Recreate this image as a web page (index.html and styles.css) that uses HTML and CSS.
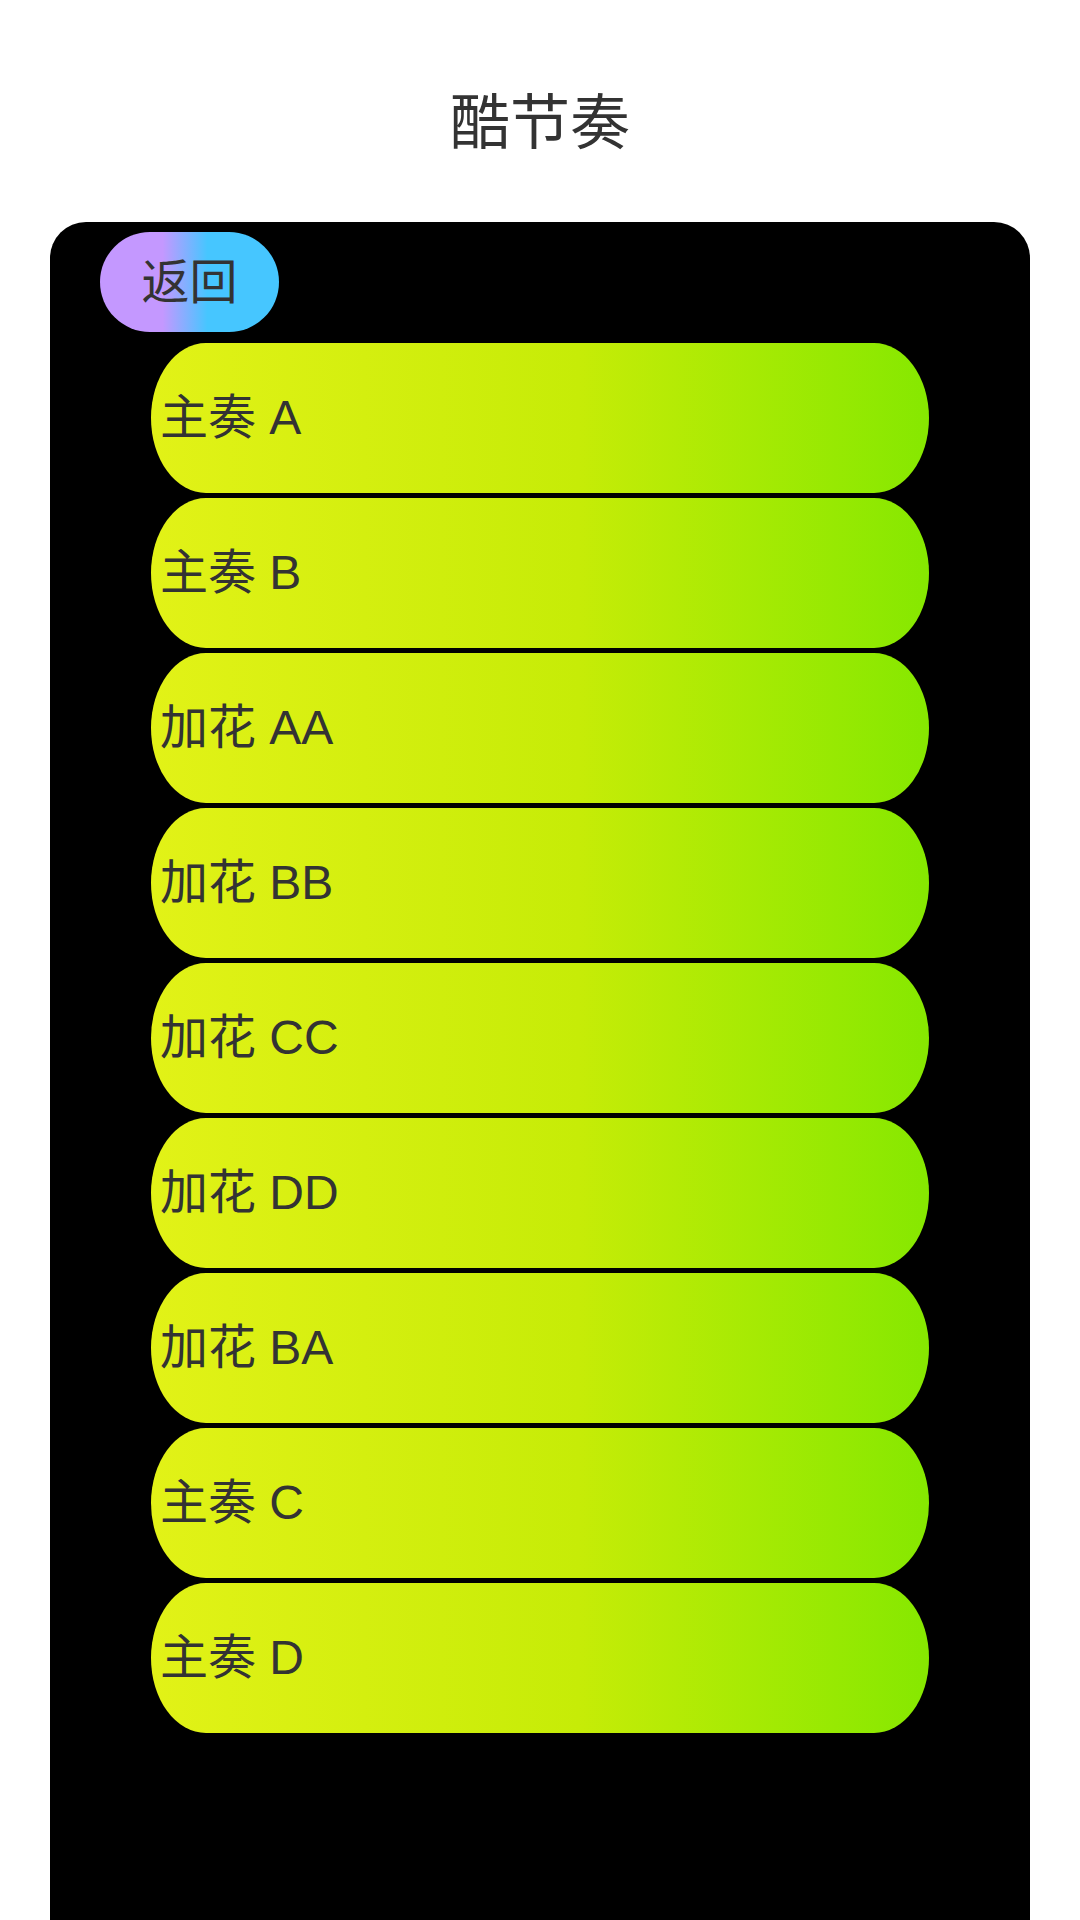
FILE: index.html
```html
<!DOCTYPE html>
<html lang="zh">

<head>
  <meta charset="UTF-8">
  <meta name="viewport" content="width=device-width, initial-scale=1.0">
  <title>酷节奏</title>
  <link rel="stylesheet" href="styles.css">
</head>

<body>
  <header class="header">
    <h1 class="title">酷节奏</h1>
  </header>

  <div class="panel">
    <div class="back-btn">返回</div>
    <ul class="beat-list">
      <li class="beat-item">主奏 A</li>
      <li class="beat-item">主奏 B</li>
      <li class="beat-item">加花 AA</li>
      <li class="beat-item">加花 BB</li>
      <li class="beat-item">加花 CC</li>
      <li class="beat-item">加花 DD</li>
      <li class="beat-item">加花 BA</li>
      <li class="beat-item">主奏 C</li>
      <li class="beat-item">主奏 D</li>
    </ul>
  </div>
</body>

</html>
```

FILE: styles.css
```css
html,
body {
  margin: 0;
  padding: 0;
  background: #fff;
  font-family: "Liberation Sans", "Noto Sans CJK SC", sans-serif;
  color: #333;
  overflow: hidden;
}

.header {
  height: 222px;
  display: flex;
  justify-content: center;
  box-sizing: border-box;
  padding-top: 84px;
}

.title {
  margin: 0;
  font-size: 60px;
  font-weight: 400;
  line-height: 80px;
}

.panel {
  margin: 0 50px;
  padding-top: 10px;
  min-height: 1800px;
  background: #000;
  border-radius: 36px 36px 0 0;
}

.back-btn {
  width: 179px;
  height: 100px;
  margin-left: 50px;
  display: flex;
  align-items: center;
  justify-content: center;
  box-sizing: border-box;
  padding-bottom: 8px;
  border-radius: 50px;
  background: linear-gradient(90deg, #c498ff 35%, #46c6ff 60%);
  font-size: 48px;
  user-select: none;
  cursor: pointer;
}

.beat-list {
  list-style: none;
  margin: 11px 0 0;
  padding: 0 101px;
  display: flex;
  flex-direction: column;
  gap: 5px;
}

.beat-item {
  height: 150px;
  display: flex;
  align-items: center;
  box-sizing: border-box;
  padding: 0 0 10px 9px;
  border-radius: 55px / 75px;
  background: linear-gradient(90deg, #e2f217, #c6ec07 55%, #86e800);
  font-size: 48px;
  cursor: pointer;
  user-select: none;
}
```
